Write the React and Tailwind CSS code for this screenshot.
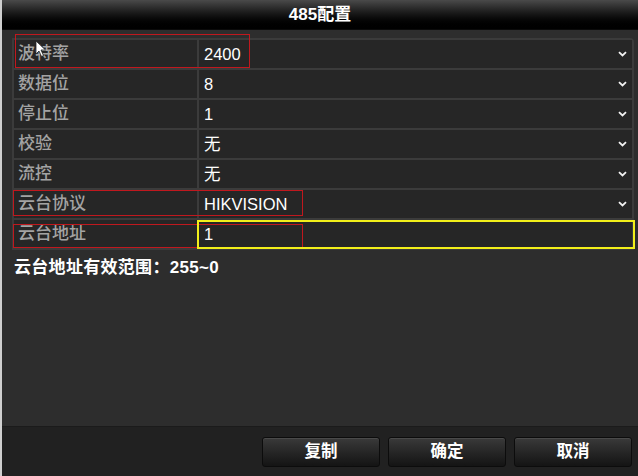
import React from "react";

const rows = [
  { label: "波特率", value: "2400", select: true },
  { label: "数据位", value: "8", select: true },
  { label: "停止位", value: "1", select: true },
  { label: "校验", value: "无", select: true },
  { label: "流控", value: "无", select: true },
  { label: "云台协议", value: "HIKVISION", select: true },
  { label: "云台地址", value: "1", select: false },
];

const font = { fontFamily: '"Liberation Sans", "Noto Sans CJK SC", sans-serif' };

function Chevron() {
  return (
    <svg width="9" height="6" viewBox="0 0 9 6" className="shrink-0">
      <path d="M1 1.2 L4.5 4.5 L8 1.2" stroke="#f2f2f2" strokeWidth="1.8" fill="none" />
    </svg>
  );
}

function Cursor() {
  return (
    <svg width="12" height="18" viewBox="0 0 12 18" className="absolute left-[33px] top-[40px]">
      <path d="M1 1 L1 14 L4 11 L6.5 16.5 L8.5 15.5 L6 10 L10.5 10 Z" fill="#ffffff" stroke="#222" strokeWidth="0.8" />
    </svg>
  );
}

export default function App() {
  return (
    <div className="relative w-[638px] h-[476px] bg-[#2d2d2d] border-l-2 border-[#cfcfcf] flex flex-col overflow-hidden" style={font}>
      <div className="h-[30px] shrink-0 bg-gradient-to-b from-[#4a4a4a] via-[#151515] to-black border-b border-[#0a0a0a] flex items-center justify-center text-white text-[17px] font-bold">
        485配置
      </div>

      <div className="flex-1 pl-[10px] pr-[4px] pt-[8px]">
        <div className="border-2 border-[#3b3b3b] rounded-tr-[4px] bg-[#3b3b3b] flex flex-col gap-[2px]">
          {rows.map((r) => (
            <div key={r.label} className="h-[28px] grid grid-cols-[183px_1fr] gap-[2px]">
              <div className="bg-[#262626] flex items-center pl-[4px] text-[#a3a3a3] text-[17px] font-medium">
                {r.label}
              </div>
              <div className="bg-[#262626] flex items-center justify-between pl-[5px] pr-[5px] text-white text-[16.5px]">
                <span>{r.value}</span>
                {r.select && <Chevron />}
              </div>
            </div>
          ))}
        </div>
        <div className="mt-[5px] pl-[2px] text-white text-[17px] font-bold tracking-[0.3px]">云台地址有效范围：255~0</div>
      </div>

      <div className="h-[50px] shrink-0 bg-[#212121] border-t border-[#1b1b1b] flex items-center justify-end gap-[8px] pr-[6px]">
        {["复制", "确定", "取消"].map((b) => (
          <button
            key={b}
            className="w-[118px] h-[30px] rounded-[3px] border border-[#0c0c0c] bg-gradient-to-b from-[#3a3a3a] to-[#141414] text-white text-[16.5px] font-bold shadow-[inset_0_1px_0_#4a4a4a]"
          >
            {b}
          </button>
        ))}
      </div>

      <div className="absolute left-[13px] top-[34px] w-[235px] h-[34px] border border-[#c0181e]" />
      <div className="absolute left-[11px] top-[190px] w-[290px] h-[26px] border border-[#c0181e]" />
      <div className="absolute left-[11px] top-[224px] w-[290px] h-[24px] border border-[#c0181e]" />
      <div className="absolute left-[195px] top-[220px] w-[438px] h-[29px] border-2 border-[#f2ef1a]" />
      <Cursor />
    </div>
  );
}
